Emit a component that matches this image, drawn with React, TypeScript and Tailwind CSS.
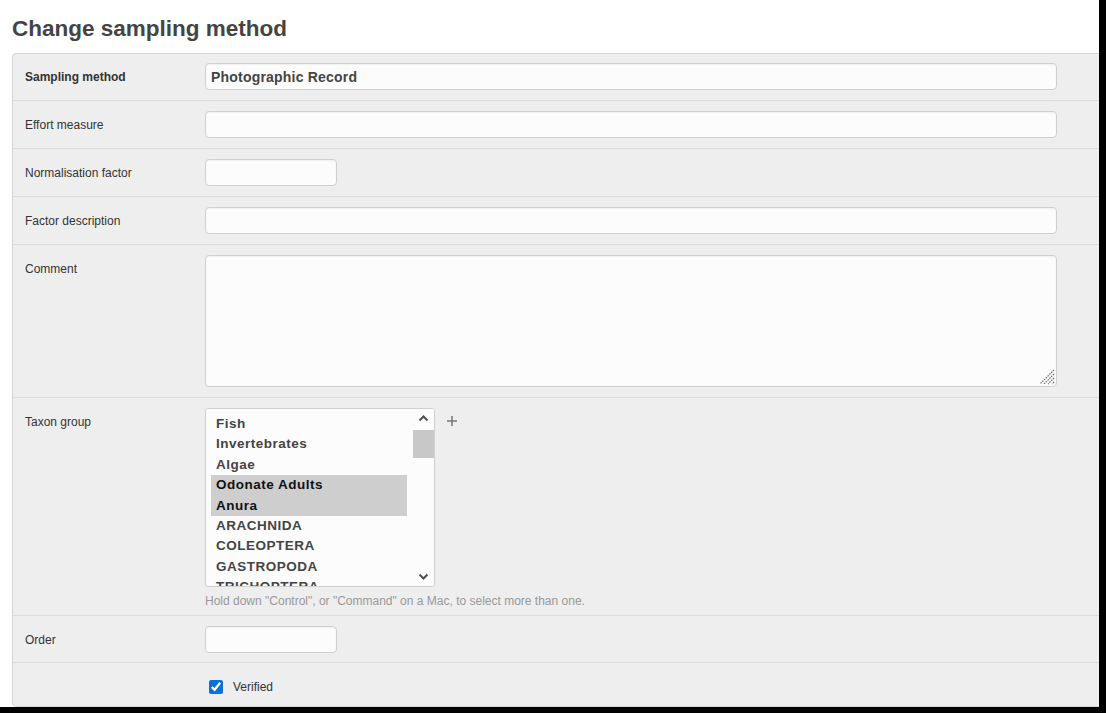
import React from "react";

const font = { fontFamily: '"Liberation Sans", Arial, sans-serif' };

function Row({ label, bold, children, first }: { label: string; bold?: boolean; children: React.ReactNode; first?: boolean }) {
  return (
    <div className={`flex pl-[12px] ${first ? "pt-[9px]" : "pt-[10px]"} pb-[10px] border-b border-[#dcdcdc]`}>
      <div className={`w-[180px] shrink-0 h-[27px] flex items-center text-[12px] text-[#333] ${bold ? "font-bold" : ""}`}>{label}</div>
      <div className="flex-1">{children}</div>
    </div>
  );
}

const inputCls = "block h-[27px] rounded-[4px] border border-[#d0d0d0] bg-[#fcfcfc] px-[5px] text-[14px] font-bold text-[#444] tracking-[0.2px] shadow-[inset_0_1px_2px_rgba(0,0,0,0.05)] outline-none";

const options = ["Fish", "Invertebrates", "Algae", "Odonate Adults", "Anura", "ARACHNIDA", "COLEOPTERA", "GASTROPODA", "TRICHOPTERA"];
const selected = new Set(["Odonate Adults", "Anura"]);

export default function App() {
  return (
    <div className="w-[1106px] h-[713px] bg-black overflow-hidden" style={font}>
      <div className="w-[1099px] h-[707px] bg-white overflow-hidden">
        <h1 className="pl-[12px] pt-[15px] h-[53px] text-[22.5px] font-bold text-[#444] leading-[28px]">Change sampling method</h1>
        <div className="ml-[12px] w-[1100px] border border-[#d5d5d5] rounded-[4px] bg-[#eeeeee]">
          <Row label="Sampling method" bold first>
            <input className={`${inputCls} w-[852px]`} defaultValue="Photographic Record" />
          </Row>
          <Row label="Effort measure">
            <input className={`${inputCls} w-[852px]`} defaultValue="" />
          </Row>
          <Row label="Normalisation factor">
            <input className={`${inputCls} w-[132px]`} defaultValue="" />
          </Row>
          <Row label="Factor description">
            <input className={`${inputCls} w-[852px]`} defaultValue="" />
          </Row>
          <Row label="Comment">
            <div className="relative w-[852px] h-[132px]">
              <textarea className="block w-[852px] h-[132px] resize-none rounded-[4px] border border-[#d0d0d0] bg-[#fcfcfc] shadow-[inset_0_1px_2px_rgba(0,0,0,0.05)] outline-none" defaultValue="" />
              <svg className="absolute right-[2px] bottom-[2px]" width="16" height="16" viewBox="0 0 16 16">
                <path d="M15 1 L1 15 M15 5 L5 15 M15 9 L9 15 M15 13 L13 15" stroke="#666" strokeWidth="1.2" strokeDasharray="1.5 1" />
              </svg>
            </div>
          </Row>
          <div className="flex pl-[12px] pt-[10px] pb-[6px] border-b border-[#dcdcdc]">
            <div className="w-[180px] shrink-0 h-[27px] flex items-center text-[12px] text-[#333]">Taxon group</div>
            <div className="flex-1">
              <div className="flex items-start">
                <div className="relative w-[230px] h-[179px] rounded-[3px] border border-[#d0d0d0] bg-[#fcfcfc] overflow-hidden">
                  <div className="absolute left-[5px] top-[5px] w-[196px]">
                    {options.map((o) => (
                      <div
                        key={o}
                        className={`h-[20.4px] leading-[20px] pl-[5px] text-[13.5px] font-bold tracking-[0.5px] whitespace-nowrap ${selected.has(o) ? "bg-[#cecece] text-[#111]" : "text-[#444]"}`}
                      >
                        {o}
                      </div>
                    ))}
                  </div>
                  <div className="absolute right-0 top-0 w-[21px] h-full bg-[#fcfcfc]">
                    <svg className="absolute left-[5px] top-[5px]" width="11" height="8" viewBox="0 0 11 8">
                      <path d="M1.5 6.5 L5.5 2.5 L9.5 6.5" fill="none" stroke="#505050" strokeWidth="2" />
                    </svg>
                    <div className="absolute left-0 top-[21px] w-[21px] h-[28px] bg-[#c8c8c8]" />
                    <svg className="absolute left-[5px] bottom-[5px]" width="11" height="8" viewBox="0 0 11 8">
                      <path d="M1.5 1.5 L5.5 5.5 L9.5 1.5" fill="none" stroke="#505050" strokeWidth="2" />
                    </svg>
                  </div>
                </div>
                <div className="ml-[11px] mt-[7px]">
                  <svg width="12" height="12" viewBox="0 0 12 12">
                    <path d="M6 1 V11 M1 6 H11" stroke="#777" strokeWidth="1.5" />
                  </svg>
                </div>
              </div>
              <div className="mt-[6px] text-[12px] text-[#999] leading-[16px]">Hold down "Control", or "Command" on a Mac, to select more than one.</div>
            </div>
          </div>
          <div className="flex pl-[12px] pt-[10px] pb-[9px] border-b border-[#dcdcdc]">
            <div className="w-[180px] shrink-0 h-[27px] flex items-center text-[12px] text-[#333]">Order</div>
            <div className="flex-1">
              <input className={`${inputCls} w-[132px]`} defaultValue="" />
            </div>
          </div>
          <div className="flex pl-[192px] h-[43px] pt-[17px] items-start">
            <label className="flex items-center text-[12px] text-[#333] h-[14px]">
              <input type="checkbox" defaultChecked className="w-[14px] h-[14px] ml-[4px] mr-[10px] accent-[#0b6fde]" />
              Verified
            </label>
          </div>
        </div>
      </div>
    </div>
  );
}
